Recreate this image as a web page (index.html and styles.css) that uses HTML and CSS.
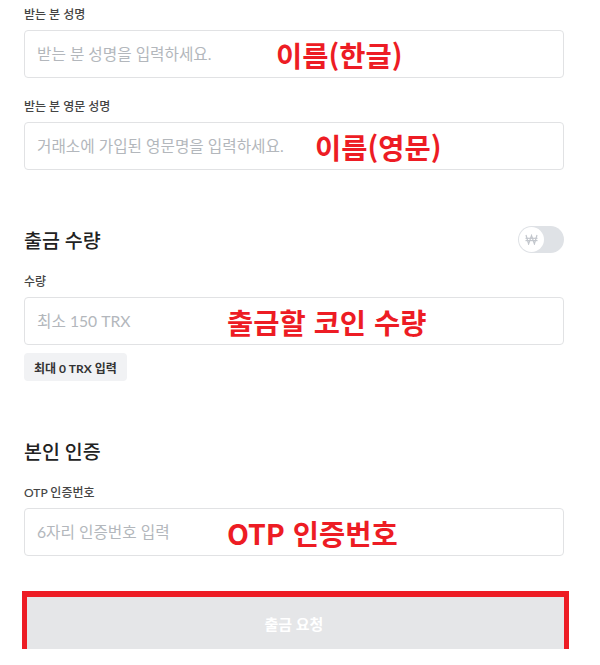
FILE: index.html
```html
<!DOCTYPE html>
<html lang="ko">
<head>
  <meta charset="UTF-8">
  <meta name="viewport" content="width=device-width, initial-scale=1.0">
  <title>출금 신청</title>
  <link rel="stylesheet" href="styles.css">
</head>
<body>
  <div class="page">
    <div class="field">
      <label class="field-label">받는 분 성명</label>
      <div class="input-wrap">
        <input class="text-input" type="text" placeholder="받는 분 성명을 입력하세요.">
        <span class="note note-name">이름(한글)</span>
      </div>
    </div>

    <div class="field">
      <label class="field-label">받는 분 영문 성명</label>
      <div class="input-wrap">
        <input class="text-input" type="text" placeholder="거래소에 가입된 영문명을 입력하세요.">
        <span class="note note-eng">이름(영문)</span>
      </div>
    </div>

    <div class="section-head">
      <h2>출금 수량</h2>
      <div class="toggle">
        <span class="knob">
          <svg width="13" height="11" viewBox="0 0 13 11" fill="none" stroke="#c3c7cd" stroke-width="1.2">
            <polyline points="1,1 3.6,10 6.5,1.5 9.4,10 12,1"/>
            <line x1="0.5" y1="4.3" x2="12.5" y2="4.3"/>
            <line x1="0.5" y1="6.6" x2="12.5" y2="6.6"/>
          </svg>
        </span>
      </div>
    </div>

    <div class="field">
      <label class="field-label">수량</label>
      <div class="input-wrap">
        <input class="text-input" type="text" placeholder="최소 150 TRX">
        <span class="note note-amount">출금할 코인 수량</span>
      </div>
      <button class="max-btn" type="button">최대 0 TRX 입력</button>
    </div>

    <div class="section-head">
      <h2>본인 인증</h2>
    </div>

    <div class="field">
      <label class="field-label">OTP 인증번호</label>
      <div class="input-wrap">
        <input class="text-input" type="text" placeholder="6자리 인증번호 입력">
        <span class="note note-otp">OTP 인증번호</span>
      </div>
    </div>

    <div class="submit-wrap">
      <button class="submit-btn" type="button">출금 요청</button>
      <span class="frame"></span>
    </div>
  </div>
</body>
</html>
```

FILE: styles.css
```css
body {
  margin: 0;
  padding: 0;
  background-color: #fff;
  font-family: Lato, "Noto Sans CJK KR", sans-serif;
  color: #222;
}
.page {
  width: 540px;
  padding: 6px 24px 0;
}
.field {
  display: flex;
  flex-direction: column;
  margin-bottom: 20px;
}
.field-label {
  font-size: 12px;
  line-height: 18px;
  font-weight: 500;
  color: #444;
  margin-bottom: 6px;
}
.input-wrap {
  position: relative;
}
.text-input {
  box-sizing: border-box;
  width: 100%;
  height: 48px;
  border: 1px solid #e1e2e4;
  border-radius: 4px;
  padding: 0 12px;
  font-family: Lato, "Noto Sans CJK KR", sans-serif;
  font-size: 15.7px;
  color: #222;
  outline: none;
}
.text-input::placeholder {
  color: #b3b7bc;
}
.note {
  position: absolute;
  top: 50%;
  transform: translateY(-50%);
  font-family: "Noto Sans CJK KR", sans-serif;
  font-weight: 700;
  font-size: 28.5px;
  color: #ed1c24;
  white-space: nowrap;
}
.note-name { left: 252px; }
.note-eng { left: 291px; }
.note-amount { left: 203px; }
.note-otp { left: 203px; }
.section-head {
  display: flex;
  justify-content: space-between;
  align-items: center;
  height: 27px;
  margin: 56px 0 20px;
}
.section-head h2 {
  margin: 0;
  font-size: 19.5px;
  font-weight: 500;
  color: #222;
}
.toggle {
  width: 46px;
  height: 27px;
  border-radius: 14px;
  background-color: #dfe2e6;
  display: flex;
  align-items: center;
  padding-left: 1px;
  box-sizing: border-box;
}
.knob {
  width: 25px;
  height: 25px;
  border-radius: 50%;
  background-color: #fff;
  display: flex;
  align-items: center;
  justify-content: center;
}
.max-btn {
  align-self: flex-start;
  margin-top: 8px;
  height: 28px;
  padding: 0 10px;
  border: none;
  border-radius: 4px;
  background-color: #f1f2f4;
  font-family: Lato, "Noto Sans CJK KR", sans-serif;
  font-size: 12px;
  font-weight: 700;
  color: #333;
}
.submit-wrap {
  position: relative;
  margin-top: 41px;
}
.submit-btn {
  display: block;
  width: 100%;
  height: 52px;
  border: none;
  background-color: #e5e6e8;
  font-family: Lato, "Noto Sans CJK KR", sans-serif;
  font-size: 15px;
  font-weight: 700;
  color: #fff;
}
.frame {
  position: absolute;
  top: -6px;
  bottom: -5px;
  left: -2px;
  right: -5px;
  border-style: solid;
  border-color: #ed1c24;
  border-width: 6px 5px 5px 5px;
}
```
